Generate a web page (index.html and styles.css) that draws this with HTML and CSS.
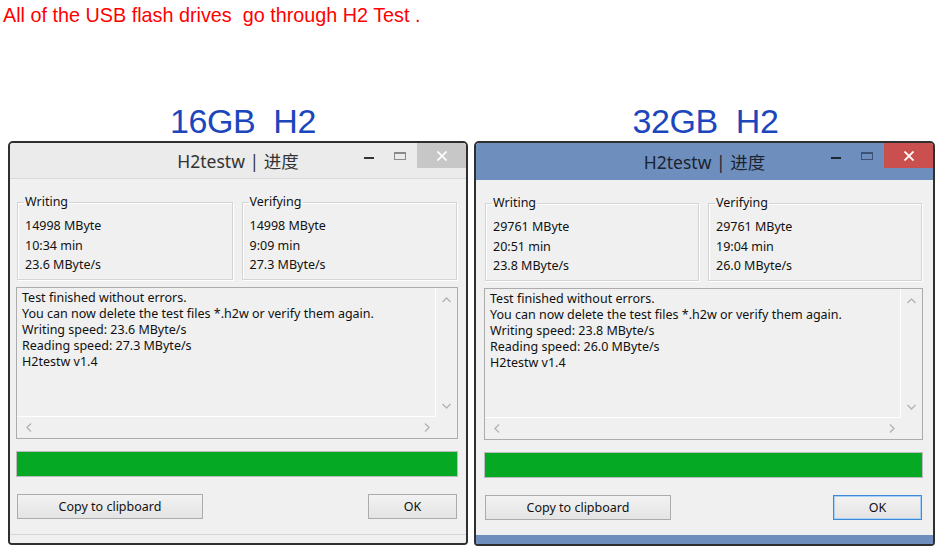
FILE: index.html
```html
<!DOCTYPE html>
<html lang="en">
<head>
<meta charset="utf-8">
<title>H2 Test</title>
<link rel="stylesheet" href="styles.css">
</head>
<body>
<p class="note">All of the USB flash drives&nbsp; go through H2 Test .</p>
<div class="row">
  <section class="col col-a">
    <h2 class="cap cap-a">16GB&nbsp; H2</h2>
    <div class="win inactive">
      <div class="titlebar">
        <span class="title">H2testw | 进度</span>
        <div class="controls">
          <span class="ctl min"><i></i></span>
          <span class="ctl max"><i></i></span>
          <span class="ctl close"><svg width="10" height="10" viewBox="0 0 10 10"><path d="M0.5 0.5L9.5 9.5M9.5 0.5L0.5 9.5" stroke="#fff" stroke-width="1.7" fill="none"/></svg></span>
        </div>
      </div>
      <div class="client">
        <div class="groups">
          <fieldset class="grp"><legend>Writing</legend><div class="val">14998 MByte</div><div class="val">10:34 min</div><div class="val">23.6 MByte/s</div></fieldset>
          <fieldset class="grp"><legend>Verifying</legend><div class="val">14998 MByte</div><div class="val">9:09 min</div><div class="val">27.3 MByte/s</div></fieldset>
        </div>
        <div class="log">
          <div class="log-text">
            <div>Test finished without errors.</div>
            <div>You can now delete the test files *.h2w or verify them again.</div>
            <div>Writing speed: 23.6 MByte/s</div>
            <div>Reading speed: 27.3 MByte/s</div>
            <div>H2testw v1.4</div>
          </div>
          <div class="vscroll">
            <svg width="9" height="6" viewBox="0 0 9 6"><path d="M0.5 5L4.5 1L8.5 5" stroke="#b4b4b4" stroke-width="1.4" fill="none"/></svg>
            <svg width="9" height="6" viewBox="0 0 9 6"><path d="M0.5 1L4.5 5L8.5 1" stroke="#b4b4b4" stroke-width="1.4" fill="none"/></svg>
          </div>
          <div class="hscroll">
            <svg width="6" height="9" viewBox="0 0 6 9"><path d="M5 0.5L1 4.5L5 8.5" stroke="#b4b4b4" stroke-width="1.4" fill="none"/></svg>
            <svg width="6" height="9" viewBox="0 0 6 9"><path d="M1 0.5L5 4.5L1 8.5" stroke="#b4b4b4" stroke-width="1.4" fill="none"/></svg>
          </div>
          <div class="corner"></div>
        </div>
        <div class="progress"><div class="bar" style="width:100%"></div></div>
        <div class="buttons">
          <button class="btn btn-copy">Copy to clipboard</button>
          <button class="btn btn-ok">OK</button>
        </div>
      </div>
      <div class="footer"></div>
    </div>
  </section>

  <section class="col col-b">
    <h2 class="cap cap-b">32GB&nbsp; H2</h2>
    <div class="win active">
      <div class="titlebar">
        <span class="title">H2testw | 进度</span>
        <div class="controls">
          <span class="ctl min"><i></i></span>
          <span class="ctl max"><i></i></span>
          <span class="ctl close"><svg width="10" height="10" viewBox="0 0 10 10"><path d="M0.5 0.5L9.5 9.5M9.5 0.5L0.5 9.5" stroke="#fff" stroke-width="1.8" fill="none"/></svg></span>
        </div>
      </div>
      <div class="client">
        <div class="groups">
          <fieldset class="grp"><legend>Writing</legend><div class="val">29761 MByte</div><div class="val">20:51 min</div><div class="val">23.8 MByte/s</div></fieldset>
          <fieldset class="grp"><legend>Verifying</legend><div class="val">29761 MByte</div><div class="val">19:04 min</div><div class="val">26.0 MByte/s</div></fieldset>
        </div>
        <div class="log">
          <div class="log-text">
            <div>Test finished without errors.</div>
            <div>You can now delete the test files *.h2w or verify them again.</div>
            <div>Writing speed: 23.8 MByte/s</div>
            <div>Reading speed: 26.0 MByte/s</div>
            <div>H2testw v1.4</div>
          </div>
          <div class="vscroll">
            <svg width="9" height="6" viewBox="0 0 9 6"><path d="M0.5 5L4.5 1L8.5 5" stroke="#b4b4b4" stroke-width="1.4" fill="none"/></svg>
            <svg width="9" height="6" viewBox="0 0 9 6"><path d="M0.5 1L4.5 5L8.5 1" stroke="#b4b4b4" stroke-width="1.4" fill="none"/></svg>
          </div>
          <div class="hscroll">
            <svg width="6" height="9" viewBox="0 0 6 9"><path d="M5 0.5L1 4.5L5 8.5" stroke="#b4b4b4" stroke-width="1.4" fill="none"/></svg>
            <svg width="6" height="9" viewBox="0 0 6 9"><path d="M1 0.5L5 4.5L1 8.5" stroke="#b4b4b4" stroke-width="1.4" fill="none"/></svg>
          </div>
          <div class="corner"></div>
        </div>
        <div class="progress"><div class="bar" style="width:100%"></div></div>
        <div class="buttons">
          <button class="btn btn-copy">Copy to clipboard</button>
          <button class="btn btn-ok default">OK</button>
        </div>
      </div>
      <div class="footer"></div>
    </div>
  </section>
</div>
</body>
</html>
```

FILE: styles.css
```css
* { box-sizing: border-box; }

html, body {
  margin: 0;
  padding: 0;
  background: #fff;
}

body {
  width: 944px;
  height: 555px;
  overflow: hidden;
  font-family: "Noto Sans", "Noto Sans CJK SC", sans-serif;
}

.note {
  margin: 0;
  padding: 5px 0 0 3px;
  height: 25px;
  font-family: "Liberation Sans", Arial, sans-serif;
  font-size: 19.8px;
  line-height: 20px;
  color: #f00;
  white-space: nowrap;
}

.row {
  display: flex;
  gap: 6px;
  padding-left: 8px;
  margin-top: 76px;
}

.col-a { width: 460px; }
.col-b { width: 461px; }

.cap {
  margin: 0;
  height: 40px;
  text-align: center;
  font-family: "Liberation Sans", Arial, sans-serif;
  font-weight: normal;
  font-size: 34px;
  line-height: 40px;
  color: #1b46bc;
  letter-spacing: -0.4px;
  white-space: nowrap;
}

.cap-a { padding-left: 10px; }
.cap-b { padding-left: 2px; }

/* window frame */
.win {
  border: 2px solid #2f2f2f;
  border-radius: 5px 5px 4px 4px;
  background: #f0f0f0;
  overflow: hidden;
}

.titlebar {
  display: grid;
  grid-template-columns: 1fr auto 1fr;
  height: 36px;
  border-bottom: 1px solid #dadada;
}

.inactive .titlebar { background: #ebebeb; }
.active .titlebar {
  background: #6e8fbd;
  border-bottom-color: #6e8fbd;
  height: 37px;
}

.title {
  grid-column: 2;
  align-self: center;
  font-size: 17.5px;
  line-height: 22px;
  color: #333;
  white-space: nowrap;
  padding-top: 1px;
}

.active .title { color: #1b2330; }

.controls {
  grid-column: 3;
  justify-self: end;
  display: flex;
  gap: 3px;
  align-items: flex-start;
}

.ctl {
  width: 28px;
  height: 25px;
  display: flex;
  justify-content: center;
}

.min i {
  display: block;
  width: 10px;
  height: 2px;
  margin-top: 14px;
  background: #333;
}

.max i {
  display: block;
  width: 12px;
  height: 8px;
  margin-top: 9px;
  border: 1px solid #8a8a8a;
  border-top-width: 2px;
}

.active .min i { background: #1f2633; }
.active .max i { border-color: #3e5275; }

.ctl.close {
  width: 49px;
  align-items: center;
}

.inactive .close { background: #c7c7c7; }
.active .close { background: #c9504f; }

/* client area */
.client {
  padding: 15px 9px 15px 7px;
}

.active .client {
  padding: 15px 11px 15px 9px;
}

.groups {
  display: grid;
  grid-template-columns: 1fr 1fr;
  gap: 9px;
}

.grp {
  margin: 0;
  min-width: 0;
  padding: 6px 6px 4px 7px;
  border: 1px solid #d4d4d4;
  box-shadow: 1px 1px 0 #fff, inset 1px 1px 0 #fff;
}

.grp legend {
  margin-left: -1px;
  padding: 0 1px;
  font-size: 12.5px;
  line-height: 16px;
  color: #111;
}

.val {
  font-size: 12.5px;
  line-height: 19.5px;
  color: #111;
  white-space: nowrap;
}

.log {
  margin: 7px -1px 0;
  height: 152px;
  display: grid;
  grid-template-columns: 1fr 21px;
  grid-template-rows: 1fr 21px;
  border: 1px solid #acacac;
  background: #f0f0f0;
}

.log-text {
  padding: 2px 5px 0;
  font-size: 12.5px;
  line-height: 16px;
  color: #111;
  white-space: nowrap;
  overflow: hidden;
  border-right: 1px solid #fff;
  border-bottom: 1px solid #fff;
}

.vscroll {
  display: flex;
  flex-direction: column;
  justify-content: space-between;
  align-items: center;
  padding: 9px 0 8px;
}

.hscroll {
  display: flex;
  justify-content: space-between;
  align-items: center;
  padding: 0 6px 0 9px;
}

.progress {
  margin: 12px -1px 0;
  height: 26px;
  border: 1px solid #bcbcbc;
  background: #e6e6e6;
}

.bar {
  height: 100%;
  background: #06a923;
}

.buttons {
  display: flex;
  justify-content: space-between;
  margin-top: 17px;
}

.btn {
  height: 25px;
  margin: 0;
  padding: 0;
  font-family: "Noto Sans", sans-serif;
  font-size: 12.5px;
  color: #111;
  border: 1px solid #acacac;
  background: linear-gradient(#f2f2f2, #e4e4e4);
  border-radius: 0;
}

.btn-copy { width: 186px; }
.btn-ok { width: 89px; }

.btn.default {
  border-color: #3f8ad6;
  box-shadow: inset 0 0 0 1px #a9d0f5;
}

.footer {
  height: 9px;
  border-top: 1px solid #d7d7d7;
}

.inactive .footer { background: #f0f0f0; }
.active .footer {
  background: #6e8fbd;
  border-top-color: #6e8fbd;
}
```
